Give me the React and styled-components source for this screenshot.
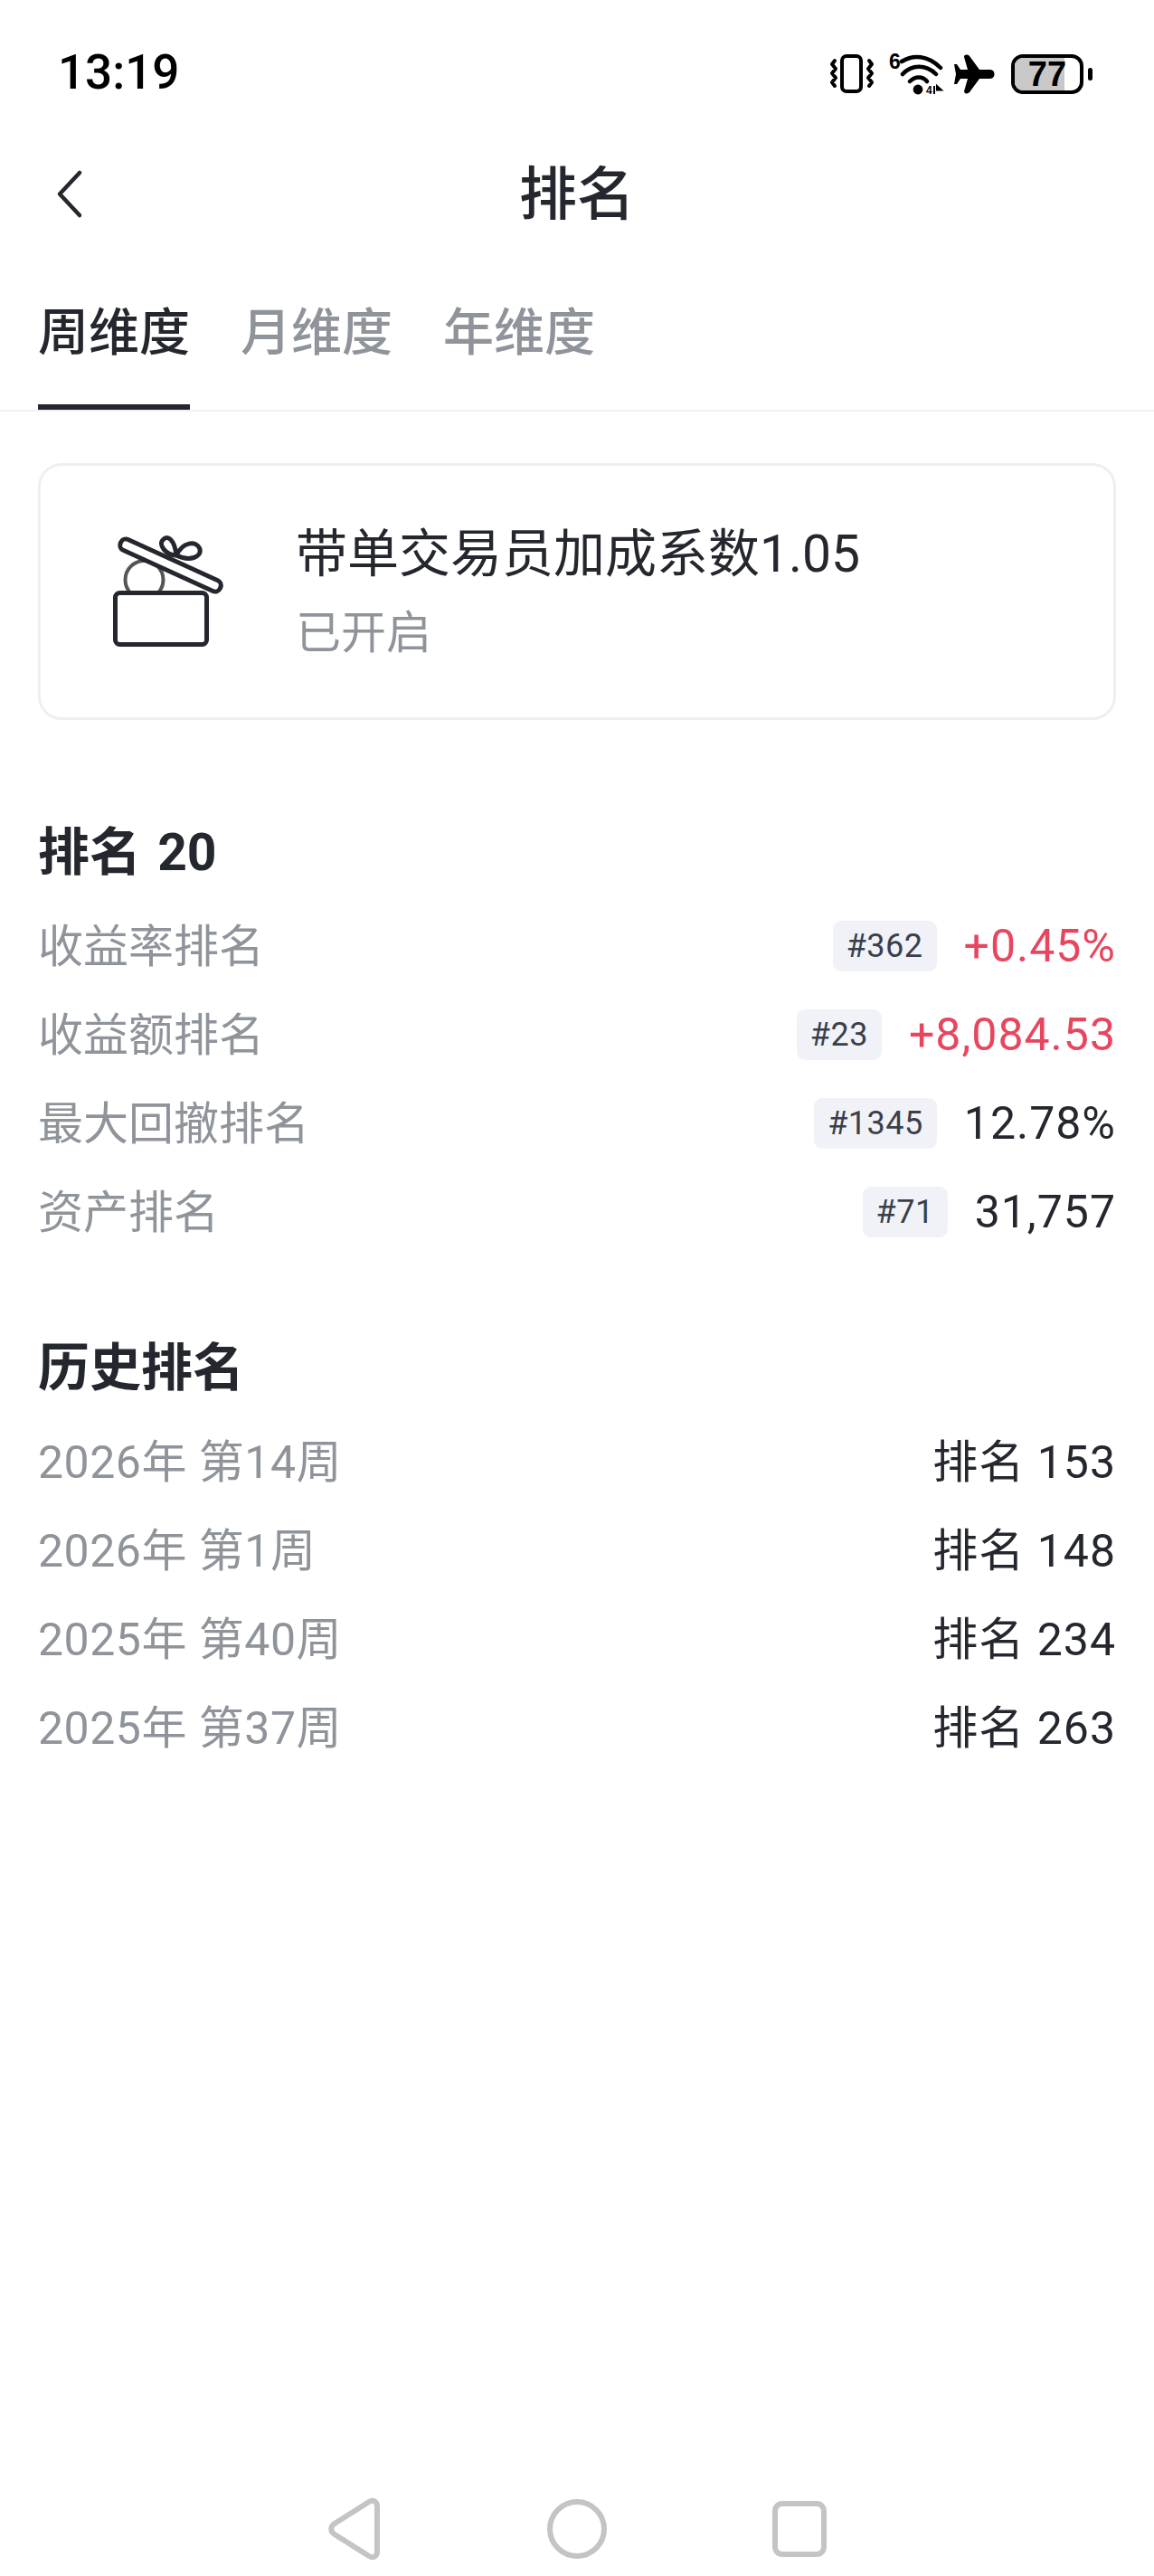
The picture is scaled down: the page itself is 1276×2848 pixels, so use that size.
import React from "react";
import styled, { createGlobalStyle } from "styled-components";

const GlobalStyle = createGlobalStyle`
  html, body { margin: 0; padding: 0; background: #fff; }
  * { box-sizing: border-box; }
`;

const dark = "#24272e";
const gray = "#8f949b";
const red = "#e8465f";
const cjk = `Roboto, "Noto Sans CJK SC", sans-serif`;

const Page = styled.div`
  width: 1276px;
  height: 2848px;
  display: flex;
  flex-direction: column;
  background: #fff;
  color: ${dark};
  font-family: ${cjk};
`;

const StatusBar = styled.div`
  height: 160px;
  padding: 0 68px 0 64px;
  display: flex;
  align-items: center;
  justify-content: space-between;
`;

const Time = styled.div`
  font-family: Roboto, sans-serif;
  font-size: 53px;
  font-weight: 500;
  color: #000;
`;

const StatusIcons = styled.div`
  display: flex;
  align-items: center;
  margin-top: 4px;
`;

const Battery = styled.div`
  position: relative;
  width: 80px;
  height: 44px;
  margin-left: 17px;
  border: 4px solid #000;
  border-radius: 13px;
  overflow: hidden;
  display: flex;
  align-items: center;
  justify-content: center;
  font-family: "Liberation Sans", sans-serif;
  font-size: 38px;
  font-weight: bold;
  color: #000;
`;

const BatteryFill = styled.div`
  position: absolute;
  left: 0;
  top: 0;
  bottom: 0;
  background: #c8c8c8;
`;

const BatteryValue = styled.span`
  position: relative;
`;

const BatteryTip = styled.div`
  width: 5px;
  height: 14px;
  margin-left: 5px;
  border-radius: 3px;
  background: #000;
`;

const NavBar = styled.header`
  position: relative;
  height: 108px;
  padding-top: 4px;
  display: flex;
  align-items: center;
  justify-content: center;
`;

const BackButton = styled.svg`
  position: absolute;
  left: 60px;
  top: 26px;
`;

const Title = styled.h1`
  margin: 0;
  font-size: 64px;
  font-weight: 500;
  line-height: 1;
`;

const Tabs = styled.div`
  height: 187px;
  padding: 0 42px;
  display: flex;
  gap: 56px;
  border-bottom: 2px solid #f2f2f3;
`;

const Tab = styled.div`
  position: relative;
  padding-top: 62px;
  font-size: 56px;
  line-height: 76px;
  font-weight: 500;
  color: ${(p) => (p.$active ? dark : gray)};
  &::after {
    content: "";
    display: ${(p) => (p.$active ? "block" : "none")};
    position: absolute;
    left: 0;
    right: 0;
    bottom: 0;
    height: 6px;
    background: ${dark};
  }
`;

const Card = styled.section`
  margin: 57px 42px 0;
  height: 284px;
  padding-left: 75px;
  display: flex;
  align-items: center;
  border: 3px solid #eeeff1;
  border-radius: 26px;
`;

const GiftIcon = styled.svg`
  flex: none;
  margin-right: 79px;
`;

const CardText = styled.div`
  display: flex;
  flex-direction: column;
  gap: 19px;
`;

const CardTitle = styled.div`
  font-size: 57px;
  line-height: 72px;
`;

const CardSub = styled.div`
  font-size: 50px;
  line-height: 64px;
  color: ${gray};
`;

const Section = styled.section`
  margin: ${(p) => p.$top}px 42px 0;
`;

const SectionTitle = styled.h2`
  margin: 0 0 11px;
  font-size: 57px;
  line-height: 80px;
  font-weight: 700;
  word-spacing: 4px;
`;

const Row = styled.div`
  height: 98px;
  display: flex;
  align-items: center;
  justify-content: space-between;
  font-size: 50px;
`;

const Label = styled.span`
  margin-top: -2px;
  color: ${gray};
  letter-spacing: ${(p) => (p.$wide ? "0.5px" : "0")};
`;

const RowRight = styled.div`
  margin-top: 6px;
  display: flex;
  align-items: center;
  gap: 30px;
`;

const Badge = styled.span`
  height: 56px;
  padding: 0 15px;
  display: flex;
  align-items: center;
  border-radius: 9px;
  background: #f0f2f7;
  font-size: 36px;
  letter-spacing: 0.5px;
  color: #3a3f4b;
`;

const Value = styled.span`
  color: ${(p) => (p.$up ? red : dark)};
  letter-spacing: 1px;
`;

const HistoryValue = styled(Value)`
  margin-top: -2px;
`;

const BottomNav = styled.nav`
  margin-top: auto;
  height: 104px;
  display: flex;
  justify-content: center;
  align-items: center;
`;

const NavSlot = styled.div`
  width: 246px;
  display: flex;
  justify-content: center;
`;

const rankRows = [
  { label: "收益率排名", badge: "#362", value: "+0.45%", up: true },
  { label: "收益额排名", badge: "#23", value: "+8,084.53", up: true },
  { label: "最大回撤排名", badge: "#1345", value: "12.78%" },
  { label: "资产排名", badge: "#71", value: "31,757" },
];

const historyRows = [
  { label: "2026年 第14周", value: "排名 153" },
  { label: "2026年 第1周", value: "排名 148" },
  { label: "2025年 第40周", value: "排名 234" },
  { label: "2025年 第37周", value: "排名 263" },
];

const VibrateIcon = () => (
  <svg width="50" height="44" viewBox="0 0 50 44" fill="none" stroke="#000">
    <rect x="14" y="2" width="21" height="39" rx="5" strokeWidth="4" />
    <path d="M6 7l-3 4 4 5-4 5 4 5-4 5 3 4M44 7l3 4-4 5 4 5-4 5 4 5-3 4" strokeWidth="4" strokeLinecap="round" strokeLinejoin="round" />
  </svg>
);

const WifiIcon = () => (
  <svg width="64" height="58" viewBox="0 -4 64 58" fill="none" stroke="#000" style={{ marginLeft: 15 }}>
    <text x="1" y="19" fontSize="23" fontWeight="bold" fontFamily="Liberation Sans" fill="#000" stroke="none">6</text>
    <path d="M15 11C28 3 44 4 58 18" strokeWidth="4.5" strokeLinecap="round" />
    <path d="M16 25C26 14 42 14 53 25" strokeWidth="4.5" strokeLinecap="round" />
    <path d="M24 33C30 27 38 27 43 33" strokeWidth="4.5" strokeLinecap="round" />
    <circle cx="33" cy="42" r="5.4" fill="#000" stroke="none" />
    <text x="42" y="47" fontSize="12" fontWeight="bold" fontFamily="Liberation Sans" fill="#000" stroke="none">4</text>
    <path d="M51 47v-9M54 38l5 4.500-5 0z" strokeWidth="2" fill="#000" />
  </svg>
);

const PlaneIcon = () => (
  <svg width="46" height="44" viewBox="0 0 46 44" fill="#000" style={{ marginLeft: 9 }}>
    <path d="M40 17H28L17 2C15 0 11 0 11 3L15 17H7L3 11H0L2 22 0 33H3L7 27H15L11 41C11 44 15 44 17 42L28 27H40C46 27 46 17 40 17Z" />
  </svg>
);

const GiftPicture = () => (
  <GiftIcon width="128" height="130" viewBox="0 0 128 130" fill="none">
    <circle cx="39.5" cy="52" r="21" stroke="#555" strokeWidth="4" />
    <g stroke={dark} strokeWidth="5">
      <path d="M75 25C63 25 55 13 60 8 65 2 73 7 75 25Z" />
      <path d="M75 25C82 10 97 8 101 18 103 27 90 32 75 25Z" />
      <rect x="7.5" y="66.5" width="101" height="57" rx="5" fill="#fff" />
      <rect x="8" y="29.500" width="121" height="13" rx="6" fill="#fff" transform="rotate(24.5 68.5 36)" />
    </g>
  </GiftIcon>
);

export default function App() {
  return (
    <Page>
      <GlobalStyle />
      <StatusBar>
        <Time>13:19</Time>
        <StatusIcons>
          <VibrateIcon />
          <WifiIcon />
          <PlaneIcon />
          <Battery>
            <BatteryFill style={{ width: "77%" }} />
            <BatteryValue>77</BatteryValue>
          </Battery>
          <BatteryTip />
        </StatusIcons>
      </StatusBar>

      <NavBar>
        <BackButton width="34" height="56" viewBox="0 0 34 56" fill="none">
          <path d="M28 5L6 28.500L28 52" stroke={dark} strokeWidth="4.5" strokeLinecap="round" strokeLinejoin="round" />
        </BackButton>
        <Title>排名</Title>
      </NavBar>

      <Tabs>
        <Tab $active>周维度</Tab>
        <Tab>月维度</Tab>
        <Tab>年维度</Tab>
      </Tabs>

      <Card>
        <GiftPicture />
        <CardText>
          <CardTitle>带单交易员加成系数1.05</CardTitle>
          <CardSub>已开启</CardSub>
        </CardText>
      </Card>

      <Section $top={107}>
        <SectionTitle>排名 20</SectionTitle>
        {rankRows.map((row) => (
          <Row key={row.label}>
            <Label>{row.label}</Label>
            <RowRight>
              <Badge>{row.badge}</Badge>
              <Value $up={row.up}>{row.value}</Value>
            </RowRight>
          </Row>
        ))}
      </Section>

      <Section $top={87}>
        <SectionTitle>历史排名</SectionTitle>
        {historyRows.map((row) => (
          <Row key={row.label}>
            <Label $wide>{row.label}</Label>
            <HistoryValue>{row.value}</HistoryValue>
          </Row>
        ))}
      </Section>

      <BottomNav>
        <NavSlot>
          <svg width="60" height="70" viewBox="0 0 60 70" fill="none" stroke="#c4c4c4" strokeWidth="6">
            <path d="M8 29L46 5C51 2 55 5 55 10V60C55 65 51 68 46 65L8 41C3 38 3 32 8 29Z" strokeLinejoin="round" />
          </svg>
        </NavSlot>
        <NavSlot>
          <svg width="70" height="70" viewBox="0 0 70 70" fill="none" stroke="#c4c4c4" strokeWidth="6">
            <circle cx="35" cy="35" r="30" />
          </svg>
        </NavSlot>
        <NavSlot>
          <svg width="64" height="66" viewBox="0 0 64 66" fill="none" stroke="#c4c4c4" strokeWidth="6">
            <rect x="5" y="5" width="54" height="56" rx="8" />
          </svg>
        </NavSlot>
      </BottomNav>
    </Page>
  );
}
